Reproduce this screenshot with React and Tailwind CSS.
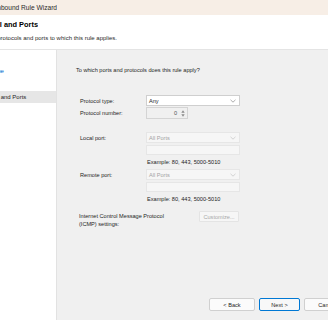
const steps = ["Steps:", "Rule Type", "Protocol and Ports", "Action", "Profile", "Name"];

const Chevron = ({ muted }) => (
  <svg width="6" height="4" viewBox="0 0 6 4" className="shrink-0">
    <polyline
      points="0.5,0.8 3,3.2 5.5,0.8"
      fill="none"
      stroke={muted ? "#c4c4c4" : "#8a8a8a"}
      strokeWidth="0.7"
    />
  </svg>
);

const Select = ({ value, disabled }) => (
  <div
    className={`w-[94px] h-[11px] flex items-center justify-between pl-[2px] pr-[3px] border ${
      disabled
        ? "bg-[#f6f6f6] border-[#e6e6e6] text-[#a3a3a3]"
        : "bg-white border-[#cfcfcf] text-[#1e1e1e]"
    }`}
  >
    <span>{value}</span>
    <Chevron muted={disabled} />
  </div>
);

const TextBox = () => (
  <div className="w-[94px] h-[10px] bg-[#f6f6f6] border border-[#e6e6e6]" />
);

const Label = ({ children }) => <div className="w-[66px] shrink-0">{children}</div>;

export default function App() {
  return (
    <div
      className="w-[328px] h-[320px] overflow-hidden flex flex-col bg-[#f0f0f0] text-[#1e1e1e] text-[5.6px] leading-[8px]"
      style={{ fontFamily: '"Liberation Sans", Arial, sans-serif' }}
    >
      {/* title bar */}
      <div className="h-[15px] shrink-0 bg-[#f7eee6] flex items-center">
        <div className="w-[57px] flex justify-end overflow-hidden whitespace-nowrap text-[6.6px] text-[#2a2a2a]">
          Inbound Rule Wizard
        </div>
      </div>

      {/* header */}
      <div className="h-[35px] shrink-0 bg-white border-b border-[#e4e4e4] flex flex-col">
        <div className="mt-[5px] w-[38px] flex justify-end overflow-hidden whitespace-nowrap text-[7.4px] leading-[10px] font-bold text-black">
          Protocol and Ports
        </div>
        <div className="mt-[4px] w-[117px] flex justify-end overflow-hidden whitespace-nowrap text-[6px] text-[#2a2a2a]">
          Specify the protocols and ports to which this rule applies.
        </div>
      </div>

      <div className="flex flex-1 min-h-0">
        {/* steps */}
        <div className="w-[57px] shrink-0 bg-white border-r border-[#e2e2e2] overflow-hidden whitespace-nowrap pt-[2px] text-[6px]">
          {steps.map((s, i) => (
            <div
              key={s}
              className={`h-[12px] flex items-center ${i === 1 ? "mt-[1px] text-[#0066cc]" : ""} ${
                i === 2 ? "mt-[14px] bg-[#e6e6e6]" : ""
              } ${i > 2 ? "mt-[8px]" : ""}`}
            >
              <span className="ml-[-23px]">{s}</span>
            </div>
          ))}
        </div>

        {/* content */}
        <div className="flex-1 flex flex-col">
          <div className="mt-[16px] ml-[19px] whitespace-nowrap">
            To which ports and protocols does this rule apply?
          </div>

          <div className="ml-[23px] flex flex-col">
            <div className="mt-[21px] flex items-center">
              <Label>Protocol type:</Label>
              <Select value="Any" />
            </div>
            <div className="mt-[1px] flex items-center">
              <Label>Protocol number:</Label>
              <div className="w-[42px] h-[12px] bg-[#f0f0f0] border border-[#d4d4d4] flex items-center justify-end">
                <span className="text-[#555]">0</span>
                <div className="ml-[3px] mr-[2px] w-[5px] flex flex-col items-center gap-[1px]">
                  <svg width="4" height="3" viewBox="0 0 4 3">
                    <polygon points="2,0.3 3.7,2.7 0.3,2.7" fill="#8a8a8a" />
                  </svg>
                  <svg width="4" height="3" viewBox="0 0 4 3">
                    <polygon points="0.3,0.3 3.7,0.3 2,2.7" fill="#8a8a8a" />
                  </svg>
                </div>
              </div>
            </div>

            <div className="mt-[13px] flex items-center">
              <Label>Local port:</Label>
              <Select value="All Ports" disabled />
            </div>
            <div className="mt-[2px] flex">
              <Label />
              <TextBox />
            </div>
            <div className="mt-[2px] flex leading-[10px]">
              <Label />
              <span className="ml-[1px]">Example: 80, 443, 5000-5010</span>
            </div>

            <div className="mt-[2px] flex items-center">
              <Label>Remote port:</Label>
              <Select value="All Ports" disabled />
            </div>
            <div className="mt-[2px] flex">
              <Label />
              <TextBox />
            </div>
            <div className="mt-[2px] flex leading-[10px]">
              <Label />
              <span className="ml-[1px]">Example: 80, 443, 5000-5010</span>
            </div>

            <div className="mt-[7px] flex items-start">
              <div className="w-[119px] shrink-0 mt-[1px] ml-[-1px]">
                Internet Control Message Protocol
                <br />
                (ICMP) settings:
              </div>
              <div className="ml-[1px] w-[40px] h-[11px] bg-[#f6f6f6] border border-[#e4e4e4] rounded-[1px] flex items-center justify-center text-[#a8a8a8]">
                Customize...
              </div>
            </div>
          </div>

          {/* buttons */}
          <div className="mt-auto mb-[9px] ml-[152px] flex gap-[4px] whitespace-nowrap">
            <button className="w-[46px] h-[13px] shrink-0 bg-[#fbfbfb] border border-[#d0d0d0] rounded-[2px] flex items-center justify-center">
              &lt; Back
            </button>
            <button className="w-[41px] h-[13px] shrink-0 bg-[#f8f8f8] border border-[#0078d4] rounded-[2px] flex items-center justify-center">
              Next &gt;
            </button>
            <button className="w-[46px] h-[13px] shrink-0 bg-[#fbfbfb] border border-[#d0d0d0] rounded-[2px] flex items-center justify-center">
              Cancel
            </button>
          </div>
        </div>
      </div>
    </div>
  );
}
